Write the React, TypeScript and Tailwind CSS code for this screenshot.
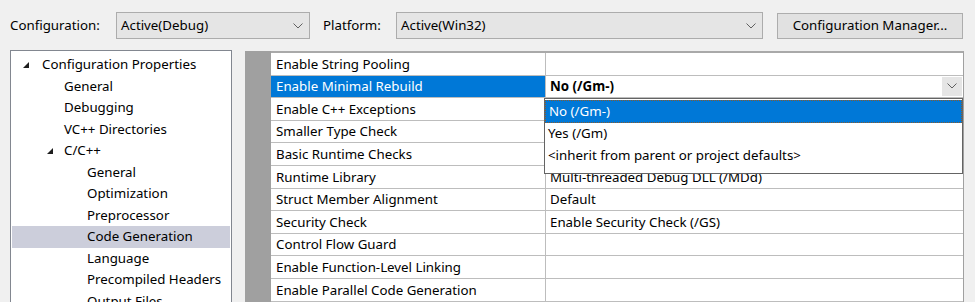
import type { ReactNode } from 'react'

function Chevron({ className = '' }: { className?: string }) {
  return (
    <svg width="10" height="6" viewBox="0 0 10 6" className={className}>
      <polyline points="0.5,0.5 5,5 9.5,0.5" fill="none" stroke="#606060" strokeWidth="1" />
    </svg>
  )
}

function Combo({ width, text }: { width: string; text: string }) {
  return (
    <div className={`${width} h-[27px] flex items-center justify-between bg-[#e5e5e5] border border-[#acacac] pl-[4px] pr-[6px]`}>
      <span>{text}</span>
      <Chevron />
    </div>
  )
}

function Arrow() {
  return (
    <svg width="6" height="6" viewBox="0 0 6 6">
      <polygon points="6,0 6,6 0,6" fill="#1e1e1e" />
    </svg>
  )
}

const tree: { label: string; pad: string; open?: boolean; sel?: boolean }[] = [
  { label: 'Configuration Properties', pad: 'pl-[11px]', open: true },
  { label: 'General', pad: 'pl-[52px]' },
  { label: 'Debugging', pad: 'pl-[52px]' },
  { label: 'VC++ Directories', pad: 'pl-[52px]' },
  { label: 'C/C++', pad: 'pl-[35px]', open: true },
  { label: 'General', pad: 'pl-[75px]' },
  { label: 'Optimization', pad: 'pl-[75px]' },
  { label: 'Preprocessor', pad: 'pl-[75px]' },
  { label: 'Code Generation', pad: 'pl-[75px]', sel: true },
  { label: 'Language', pad: 'pl-[75px]' },
  { label: 'Precompiled Headers', pad: 'pl-[75px]' },
  { label: 'Output Files', pad: 'pl-[75px]' },
]

// values of rows 3-5 sit under the open list, so they are left blank
const props: [string, string][] = [
  ['Enable String Pooling', ''],
  ['Enable Minimal Rebuild', 'No (/Gm-)'],
  ['Enable C++ Exceptions', ''],
  ['Smaller Type Check', ''],
  ['Basic Runtime Checks', ''],
  ['Runtime Library', 'Multi-threaded Debug DLL (/MDd)'],
  ['Struct Member Alignment', 'Default'],
  ['Security Check', 'Enable Security Check (/GS)'],
  ['Control Flow Guard', ''],
  ['Enable Function-Level Linking', ''],
  ['Enable Parallel Code Generation', ''],
]

function Row({ name, children, selected }: { name: string; children?: ReactNode; selected?: boolean }) {
  return (
    <div className="flex h-[22.6px] border-b border-[#bdbdbd]">
      <div className={`w-[274px] shrink-0 flex items-center pl-[5px] pt-[1px] ${selected ? 'bg-[#0078d7] text-white' : ''}`}>
        {name}
      </div>
      <div className="flex-1 flex items-center border-l border-[#bdbdbd] pl-[4px] pt-[1px] relative">{children}</div>
    </div>
  )
}

export default function App() {
  return (
    <div
      className="w-[975px] h-[302px] overflow-hidden bg-[#f0f0f0] text-[13.3px] text-black leading-none"
      style={{ fontFamily: '"Noto Sans", "Open Sans", sans-serif' }}
    >
      <div className="flex items-center mt-[12px] h-[27px]">
        <span className="ml-[10px] w-[106px]">Configuration:</span>
        <Combo width="w-[194px]" text="Active(Debug)" />
        <span className="ml-[13px] w-[73px]">Platform:</span>
        <Combo width="w-[367px]" text="Active(Win32)" />
        <button className="ml-[14px] w-[186px] h-[26px] bg-[#e1e1e1] border border-[#adadad]">
          Configuration Manager...
        </button>
      </div>

      <div className="flex mt-[11px]">
        <div className="ml-[10px] w-[222px] h-[260px] shrink-0 bg-white border border-[#828790] pt-[3px] overflow-hidden">
          {tree.map((t, i) => (
            <div
              key={i}
              className={`h-[21.5px] flex items-center ml-[1px] mr-[1px] ${t.pad} ${t.sel ? 'bg-[#cccedb]' : ''}`}
            >
              {t.open && (
                <span className={t.pad === 'pl-[11px]' ? 'w-[19px]' : 'w-[17px]'}>
                  <Arrow />
                </span>
              )}
              <span>{t.label}</span>
            </div>
          ))}
        </div>

        <div className="ml-[13px] mt-[1px] flex h-[260px]">
          <div className="w-[26px] bg-[#a0a0a0]" />
          <div className="w-[693px] relative bg-white border-t-[2px] border-r border-[#a0a0a0] border-t-[#a9a9a9]">
            {props.map(([n, v], i) =>
              i === 1 ? (
                <Row key={i} name={n} selected>
                  <span className="font-bold">{v}</span>
                  <div className="absolute right-[1px] top-[1px] bottom-[1px] w-[20px] bg-[#e5e5e5] flex items-center justify-center">
                    <Chevron />
                  </div>
                </Row>
              ) : (
                <Row key={i} name={n}>
                  {v}
                </Row>
              ),
            )}

            <div className="absolute left-[273px] top-[45px] w-[419px] h-[76px] bg-white border border-[#646464]">
              <div className="h-[23px] mt-[1px] flex items-center pl-[3px] bg-[#0078d7] text-white border border-dotted border-[#8a5a2a]">
                No (/Gm-)
              </div>
              <div className="h-[22px] flex items-center pl-[3px]">Yes (/Gm)</div>
              <div className="h-[22px] flex items-center pl-[3px]">&lt;inherit from parent or project defaults&gt;</div>
            </div>
          </div>
        </div>
      </div>
    </div>
  )
}
